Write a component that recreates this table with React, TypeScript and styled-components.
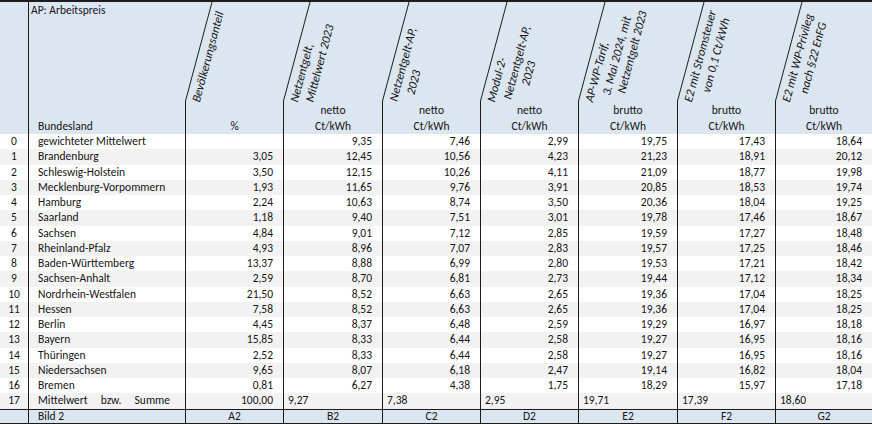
import React from 'react';
import styled, { createGlobalStyle } from 'styled-components';

const GlobalStyle = createGlobalStyle`
  html, body { margin: 0; padding: 0; background: #ffffff; }
  body {
    font-family: Carlito, Lato, "Liberation Sans", sans-serif;
    color: #151515;
  }
  * { box-sizing: border-box; }
`;

const COLS = '28px 157px 98px 99px 98px 98px 99px 98px 97px';
const LINE = '#1c1c1c';
const BLUE = '#dce6f1';
const STRIPE = '#f2f2f2';

const Sheet = styled.div`
  width: 872px;
  height: 424px;
  overflow: hidden;
  border-top: 2px solid ${LINE};
  font-size: 11.5px;
`;

const HeaderRow = styled.div`
  display: grid;
  grid-template-columns: ${COLS};
  height: 132px;
  background: ${BLUE};
`;

const HeadIndex = styled.div``;

const HeadName = styled.div`
  border-left: 1px solid ${LINE};
  display: flex;
  flex-direction: column;
  justify-content: space-between;
  line-height: 16px;
`;

const SheetTitle = styled.div`
  padding: 0 0 0 2px;
`;

const NameLabel = styled.div`
  padding-left: 9px;
`;

const HeadCol = styled.div`
  display: flex;
  flex-direction: column;
`;

const TitleArea = styled.div`
  position: relative;
  height: 99px;
  &::before {
    content: '';
    position: absolute;
    left: 0;
    bottom: 0;
    width: 1px;
    height: 100%;
    background: ${LINE};
    transform-origin: left bottom;
    transform: skewX(-15deg);
  }
`;

const RotatedLabel = styled.div`
  position: absolute;
  top: 98px;
  left: 4px;
  transform-origin: 0 0;
  transform: rotate(-75deg);
  white-space: nowrap;
  font-style: italic;
  font-size: 12.2px;
  line-height: 14.5px;
`;

const LabelLine = styled.span<{ $offset: number }>`
  display: block;
  padding-left: ${(p) => p.$offset}px;
`;

const UnitArea = styled.div`
  flex: 1;
  border-left: 1px solid ${LINE};
  display: flex;
  flex-direction: column;
  justify-content: flex-end;
  align-items: center;
  line-height: 16px;
`;

const DataRow = styled.div<{ $striped: boolean }>`
  display: grid;
  grid-template-columns: ${COLS};
  height: 15.25px;
  line-height: 15px;
  background: ${(p) => (p.$striped ? STRIPE : '#ffffff')};
`;

const IndexCell = styled.div`
  text-align: center;
`;

const NameCell = styled.div<{ $spread?: boolean }>`
  border-left: 1px solid ${LINE};
  padding: 0 15px 0 9px;
  white-space: nowrap;
  display: flex;
  justify-content: ${(p) => (p.$spread ? 'space-between' : 'flex-start')};
`;

const NumCell = styled.div<{ $left?: boolean }>`
  border-left: 1px solid ${LINE};
  text-align: ${(p) => (p.$left ? 'left' : 'right')};
  padding: ${(p) => (p.$left ? '0 0 0 4px' : '0 10px 0 0')};
  white-space: nowrap;
`;

const FooterRow = styled.div`
  display: grid;
  grid-template-columns: ${COLS};
  height: 15px;
  line-height: 13px;
  background: ${BLUE};
  border-top: 1px solid ${LINE};
  border-bottom: 1px solid ${LINE};
`;

const FootCell = styled.div<{ $first?: boolean }>`
  border-left: ${(p) => (p.$first ? 'none' : `1px solid ${LINE}`)};
  text-align: center;
`;

const FootName = styled.div`
  border-left: 1px solid ${LINE};
  padding-left: 9px;
`;

type Header = { lines: [string, number][]; units: string[] };

const headers: Header[] = [
  { lines: [['Bevölkerungsanteil', 0]], units: ['%'] },
  { lines: [['Netzentgelt,', 0], ['Mittelwert 2023', 4]], units: ['netto', 'Ct/kWh'] },
  { lines: [['Netzentgelt-AP,', 1], ['2023', 12]], units: ['netto', 'Ct/kWh'] },
  {
    lines: [['Modul-2-', 0], ['Netzentgelt-AP,', 7], ['2023', 25]],
    units: ['netto', 'Ct/kWh'],
  },
  {
    lines: [['AP-WP-Tarif,', 0], ['3. Mai 2024, mit', 11], ['Netzentgelt 2023', 17]],
    units: ['brutto', 'Ct/kWh'],
  },
  { lines: [['E2 mit Stromsteuer', 0], ['von 0,1 Ct/kWh', 14]], units: ['brutto', 'Ct/kWh'] },
  { lines: [['E2 mit WP-Privileg', 0], ['nach §22 EnFG', 13]], units: ['brutto', 'Ct/kWh'] },
];

const rows: string[][] = [
  ['gewichteter Mittelwert', '', '9,35', '7,46', '2,99', '19,75', '17,43', '18,64'],
  ['Brandenburg', '3,05', '12,45', '10,56', '4,23', '21,23', '18,91', '20,12'],
  ['Schleswig-Holstein', '3,50', '12,15', '10,26', '4,11', '21,09', '18,77', '19,98'],
  ['Mecklenburg-Vorpommern', '1,93', '11,65', '9,76', '3,91', '20,85', '18,53', '19,74'],
  ['Hamburg', '2,24', '10,63', '8,74', '3,50', '20,36', '18,04', '19,25'],
  ['Saarland', '1,18', '9,40', '7,51', '3,01', '19,78', '17,46', '18,67'],
  ['Sachsen', '4,84', '9,01', '7,12', '2,85', '19,59', '17,27', '18,48'],
  ['Rheinland-Pfalz', '4,93', '8,96', '7,07', '2,83', '19,57', '17,25', '18,46'],
  ['Baden-Württemberg', '13,37', '8,88', '6,99', '2,80', '19,53', '17,21', '18,42'],
  ['Sachsen-Anhalt', '2,59', '8,70', '6,81', '2,73', '19,44', '17,12', '18,34'],
  ['Nordrhein-Westfalen', '21,50', '8,52', '6,63', '2,65', '19,36', '17,04', '18,25'],
  ['Hessen', '7,58', '8,52', '6,63', '2,65', '19,36', '17,04', '18,25'],
  ['Berlin', '4,45', '8,37', '6,48', '2,59', '19,29', '16,97', '18,18'],
  ['Bayern', '15,85', '8,33', '6,44', '2,58', '19,27', '16,95', '18,16'],
  ['Thüringen', '2,52', '8,33', '6,44', '2,58', '19,27', '16,95', '18,16'],
  ['Niedersachsen', '9,65', '8,07', '6,18', '2,47', '19,14', '16,82', '18,04'],
  ['Bremen', '0,81', '6,27', '4,38', '1,75', '18,29', '15,97', '17,18'],
];

const sums = ['9,27', '7,38', '2,95', '19,71', '17,39', '18,60'];
const footLabels = ['A2', 'B2', 'C2', 'D2', 'E2', 'F2', 'G2'];

export default function App() {
  return (
    <>
      <GlobalStyle />
      <Sheet>
        <HeaderRow>
          <HeadIndex />
          <HeadName>
            <SheetTitle>AP: Arbeitspreis</SheetTitle>
            <NameLabel>Bundesland</NameLabel>
          </HeadName>
          {headers.map((h, i) => (
            <HeadCol key={i}>
              <TitleArea>
                <RotatedLabel>
                  {h.lines.map(([t, o], j) => (
                    <LabelLine key={j} $offset={o}>
                      {t}
                    </LabelLine>
                  ))}
                </RotatedLabel>
              </TitleArea>
              <UnitArea>
                {h.units.map((u, j) => (
                  <div key={j}>{u}</div>
                ))}
              </UnitArea>
            </HeadCol>
          ))}
        </HeaderRow>

        {rows.map((r, i) => (
          <DataRow key={i} $striped={i % 2 === 1}>
            <IndexCell>{i}</IndexCell>
            <NameCell>{r[0]}</NameCell>
            {r.slice(1).map((v, j) => (
              <NumCell key={j}>{v}</NumCell>
            ))}
          </DataRow>
        ))}

        <DataRow $striped>
          <IndexCell>17</IndexCell>
          <NameCell $spread>
            <span>Mittelwert</span>
            <span>bzw.</span>
            <span>Summe</span>
          </NameCell>
          <NumCell>100,00</NumCell>
          {sums.map((v, j) => (
            <NumCell key={j} $left>
              {v}
            </NumCell>
          ))}
        </DataRow>

        <FooterRow>
          <FootCell $first />
          <FootName>Bild 2</FootName>
          {footLabels.map((l) => (
            <FootCell key={l}>{l}</FootCell>
          ))}
        </FooterRow>
      </Sheet>
    </>
  );
}
